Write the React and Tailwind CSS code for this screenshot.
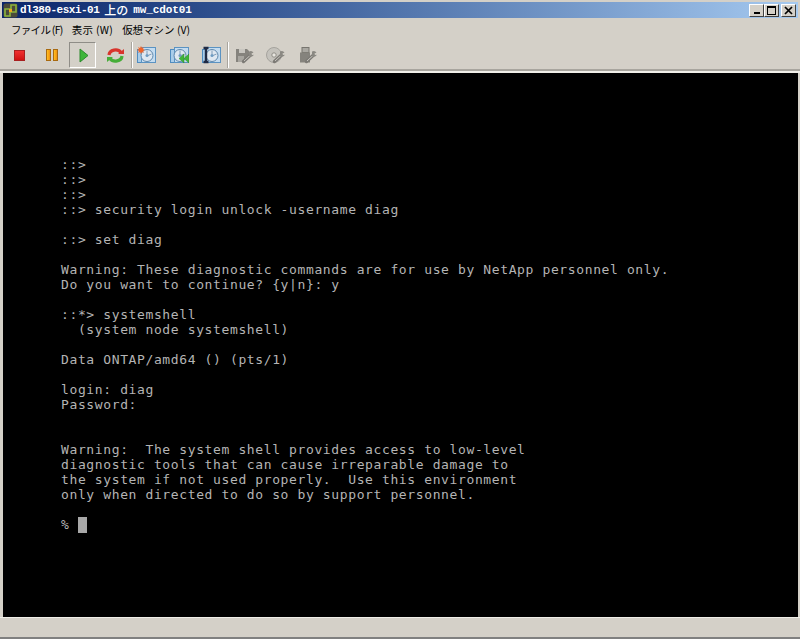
const terminalLines = [
  "::>",
  "::>",
  "::>",
  "::> security login unlock -username diag",
  "",
  "::> set diag",
  "",
  "Warning: These diagnostic commands are for use by NetApp personnel only.",
  "Do you want to continue? {y|n}: y",
  "",
  "::*> systemshell",
  "  (system node systemshell)",
  "",
  "Data ONTAP/amd64 () (pts/1)",
  "",
  "login: diag",
  "Password:",
  "",
  "",
  "Warning:  The system shell provides access to low-level",
  "diagnostic tools that can cause irreparable damage to",
  "the system if not used properly.  Use this environment",
  "only when directed to do so by support personnel.",
  "",
];

function DiscBase({ children }) {
  return (
    <svg width="19" height="18" viewBox="0 0 19 18">
      <rect x="0.5" y="3.5" width="15" height="13" fill="#a9cdea" stroke="#4f8cc0" />
      <rect x="4.5" y="1.5" width="14" height="15" fill="#c4dcf0" stroke="#5b93c2" />
      <circle cx="10" cy="9.5" r="6" fill="#dfe8f1" stroke="#5f88ad" />
      <path d="M10 4.5v4M14.5 8l-3.5 1.5" stroke="#7f9cb8" fill="none" />
      <circle cx="10" cy="9.5" r="1.5" fill="#6f9cc2" />
      {children}
    </svg>
  );
}

function GrayTool({ children }) {
  return (
    <svg width="19" height="18" viewBox="0 0 19 18">
      {children}
      <path d="M8.5 15.5l6.5-6" stroke="#7c7a75" strokeWidth="3.4" strokeLinecap="round" />
      <path d="M9 15l6-5.5" stroke="#c8c6c0" strokeWidth="1" />
      <path d="M14 5.5a3.4 3.4 0 0 1 4.5 1l-2 1 .3 1.4 2-.2a3.4 3.4 0 0 1-4.8 1.6z" fill="#8a8882" />
    </svg>
  );
}

function Sep() {
  return <div className="w-[2px] h-[26px] shrink-0 bg-[#a8a59e] border-r border-white" />;
}

function Slot({ className, children }) {
  return <div className={`flex items-center justify-center h-[26px] shrink-0 ${className}`}>{children}</div>;
}

function WinButton({ children }) {
  return (
    <div className="w-[15px] h-[13px] bg-[#d4d0c8] border border-t-white border-l-white border-r-[#404040] border-b-[#404040] flex items-center justify-center">
      {children}
    </div>
  );
}

export default function App() {
  return (
    <div className="w-[800px] h-[639px] bg-[#d4d0c8] flex flex-col overflow-hidden font-['Liberation_Sans',sans-serif]">
      {/* Title bar */}
      <div className="mx-[2px] mt-[2px] h-[16px] shrink-0 bg-gradient-to-r from-[#0a246a] to-[#a6caf0] flex items-center pl-[1px] pr-[2px]">
        <svg width="15" height="15" viewBox="0 0 15 15" className="shrink-0">
          <rect x="0.5" y="0.5" width="14" height="14" rx="2" fill="#4a4a3a" />
          <path d="M2 6h5v7H2zM8 2h5v7H8z" fill="none" stroke="#8db43c" strokeWidth="1.6" />
          <rect x="6" y="6" width="3" height="3" fill="#f0a81e" />
        </svg>
        <div className="ml-[2px] text-white font-bold whitespace-pre flex items-center font-['Liberation_Mono',monospace] text-[11px]">
          <span className="tracking-[-0.5px]">dl380-esxi-01</span>
          <span className="ml-[5px] font-['Noto_Sans_CJK_JP',sans-serif] text-[12px] font-medium">上の</span>
          <span className="ml-[5px] tracking-[-0.1px]">mw_cdot01</span>
        </div>
        <div className="ml-auto flex items-center">
          <WinButton>
            <div className="w-[6px] h-[2px] bg-black mt-[6px]" />
          </WinButton>
          <WinButton>
            <div className="w-[9px] h-[9px] border border-black border-t-2" />
          </WinButton>
          <div className="w-[2px]" />
          <WinButton>
            <svg width="9" height="9" viewBox="0 0 9 9">
              <path d="M1 1l7 7M8 1L1 8" stroke="#000" strokeWidth="1.7" />
            </svg>
          </WinButton>
        </div>
      </div>

      {/* Menu */}
      <div className="h-[24px] shrink-0 flex items-center pl-[11px] gap-[9px] text-[10.5px] text-black font-['Noto_Sans_CJK_JP',sans-serif]">
        <span className="tracking-[-0.7px]">ファイル (F)</span>
        <span className="tracking-[0.3px]">表示 (W)</span>
        <span>仮想マシン (V)</span>
      </div>

      {/* Toolbar */}
      <div className="h-[26px] shrink-0 flex items-center">
        <Slot className="w-[38px]">
          <div className="w-[11px] h-[11px] bg-gradient-to-b from-[#f03030] to-[#d01010] border border-[#a82020]" />
        </Slot>
        <Slot className="w-[27px] gap-[2px]">
          <div className="w-[5px] h-[12px] bg-gradient-to-r from-[#ffc020] to-[#f09010] border border-[#a86a10]" />
          <div className="w-[5px] h-[12px] bg-gradient-to-r from-[#ffc020] to-[#f09010] border border-[#a86a10]" />
        </Slot>
        <Slot className="w-[27px] ml-[4px] pl-[3px] border border-t-[#8f8d87] border-l-[#8f8d87] border-r-white border-b-white">
          <svg width="10" height="15" viewBox="0 0 10 15">
            <path d="M1 1l8 6.5L1 14z" fill="#3fb53a" stroke="#2c8a2c" />
          </svg>
        </Slot>
        <Slot className="w-[35px] pl-[3px]">
          <svg width="17" height="17" viewBox="0 0 17 17">
            <path d="M2 8a6.5 5.5 0 0 1 12-2.5" fill="none" stroke="#d8342c" strokeWidth="3.2" />
            <path d="M15 9a6.5 5.5 0 0 1-12 2.5" fill="none" stroke="#46ad38" strokeWidth="3.2" />
            <path d="M11 7h6V2z" fill="#d8342c" />
            <path d="M6 10H0v5z" fill="#46ad38" />
          </svg>
        </Slot>
        <Sep />
        <Slot className="w-[26px]">
          <DiscBase>
            <path d="M4 0l1 2 2-1-1 2 2 1-2 1 1 2-2-1-1 2-1-2-2 1 1-2-2-1 2-1-1-2 2 1z" fill="#f0642a" />
          </DiscBase>
        </Slot>
        <Slot className="w-[40px]">
          <DiscBase>
            <path d="M9 12.5l5-4.5v9zM14 12.5l5-4.5v9z" fill="#3fb53a" stroke="#2c8a2c" strokeWidth="0.5" />
          </DiscBase>
        </Slot>
        <Slot className="w-[24px]">
          <DiscBase>
            <path d="M1.5 2h5M4 2v14M1.5 16h5" stroke="#1f2a44" strokeWidth="2.4" fill="none" />
          </DiscBase>
        </Slot>
        <div className="w-[4px] shrink-0" />
        <Sep />
        <Slot className="w-[30px]">
          <GrayTool>
            <path d="M1 3h11l2 2v5l-6 6H1z" fill="#85837d" />
            <rect x="4" y="3" width="6" height="4" fill="#c8c6c0" />
            <rect x="3" y="10" width="6" height="6" fill="#a8a6a0" />
          </GrayTool>
        </Slot>
        <Slot className="w-[32px]">
          <GrayTool>
            <circle cx="8" cy="9" r="7.5" fill="#c4c2bc" stroke="#a5a39d" />
            <circle cx="8" cy="9" r="2.2" fill="#e8e6e0" stroke="#8f8d87" />
          </GrayTool>
        </Slot>
        <Slot className="w-[32px]">
          <GrayTool>
            <rect x="4" y="1.5" width="7" height="5" fill="#aaa8a2" stroke="#77756f" />
            <rect x="2" y="6.5" width="10" height="10" fill="#85837d" />
          </GrayTool>
        </Slot>
      </div>

      {/* Console */}
      <div className="mt-[1px] h-[2px] shrink-0 bg-[#a8a59e]" />
      <div className="h-[2px] shrink-0 bg-[#f0eee8]" />
      <div className="ml-[3px] mr-[2px] h-[544px] shrink-0 bg-black pt-[84px] pl-[58px] overflow-hidden">
        <pre className="text-[13px] leading-[15px] tracking-[0.62px] text-[#b4b4b4] font-['DejaVu_Sans_Mono',monospace]">
          {terminalLines.map((line, i) => (
            <div key={i} className="h-[15px]">{line}</div>
          ))}
          <div className="h-[15px] flex items-center">
            <span>%</span>
            <span className="ml-[9px] w-[9px] h-[16px] bg-[#a8a8a8]" />
          </div>
        </pre>
      </div>

      <div className="flex-1 border-t border-t-[#f0eee8]" />
      <div className="h-[2px] shrink-0 bg-[#808080]" />
    </div>
  );
}
